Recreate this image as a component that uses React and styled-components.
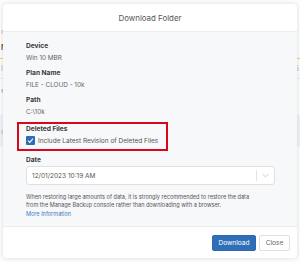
import React from 'react';
import styled, { createGlobalStyle } from 'styled-components';

const GlobalStyle = createGlobalStyle`
  html, body {
    margin: 0;
    padding: 0;
    background: #fafafa;
    font-family: Inter, "Liberation Sans", sans-serif;
  }
  * { box-sizing: border-box; }
`;

const Page = styled.div`
  width: 300px;
  height: 262px;
  position: relative;
  overflow: hidden;
  background: #fbfbfb;
  padding-top: 24px;
  display: flex;
  flex-direction: column;
`;

const PageRow = styled.div`
  height: ${p => p.h || 14}px;
  display: flex;
  align-items: center;
  justify-content: space-between;
  padding: 0 1px;
  font-size: 7px;
  color: ${p => p.color || '#888'};
  font-weight: ${p => (p.bold ? 700 : 400)};
  background: ${p => p.bg || 'transparent'};
  border-bottom: ${p => (p.line ? `1px solid ${p.line}` : 'none')};
`;

const Overlay = styled.div`
  position: absolute;
  inset: 0;
  background: rgba(255, 255, 255, 0.3);
  padding: 4px 3px;
`;

const Modal = styled.div`
  width: 294px;
  height: 254px;
  background: #fff;
  border-radius: 4px;
  box-shadow: 0 0 4px rgba(0, 0, 0, 0.14);
  display: flex;
  flex-direction: column;
  overflow: hidden;
`;

const Header = styled.div`
  height: 28px;
  flex: none;
  display: flex;
  align-items: center;
  justify-content: center;
  border-bottom: 1px solid #ececec;
  font-size: 7.9px;
  color: #555;
`;

const Body = styled.div`
  flex: 1;
  background: #f7f8fa;
  padding: 9px 22px 0 23px;
  display: flex;
  flex-direction: column;
`;

const Field = styled.div`
  display: flex;
  flex-direction: column;
  margin-bottom: 5.5px;
`;

const Label = styled.div`
  font-size: 6.6px;
  line-height: 10px;
  font-weight: 700;
  color: #3a3a3a;
`;

const Value = styled.div`
  font-size: 6.4px;
  line-height: 10px;
  margin-top: 1.5px;
  color: #666;
`;

const Highlight = styled.div`
  align-self: flex-start;
  margin: 0 0 0 -9px;
  width: 151px;
  border: 2px solid #d9061c;
  padding: 0 0 4px 7px;
  display: flex;
  flex-direction: column;
`;

const CheckRow = styled.label`
  display: flex;
  align-items: center;
  gap: 3px;
  margin-top: 2px;
  font-size: 6.5px;
  white-space: nowrap;
  color: #555;
`;

const Check = styled.span`
  width: 9px;
  height: 9px;
  border-radius: 1px;
  background: #2c6db6;
  display: flex;
  align-items: center;
  justify-content: center;
`;

const DateLabel = styled(Label)`
  margin-top: 4px;
`;

const Select = styled.div`
  margin-top: 1px;
  height: 19px;
  width: 249px;
  background: #fff;
  border: 1px solid #e0e0e0;
  border-radius: 3px;
  display: flex;
  align-items: center;
  font-size: 6.5px;
  color: #555;
`;

const SelectText = styled.div`
  flex: 1;
  padding-left: 5px;
`;

const Divider = styled.div`
  width: 1px;
  height: 11px;
  background: #e2e2e2;
`;

const Chevron = styled.div`
  width: 17px;
  display: flex;
  align-items: center;
  justify-content: center;
`;

const Help = styled.p`
  margin: 8px 0 0;
  font-size: 5.55px;
  line-height: 8.3px;
  color: #555;
`;

const Link = styled.a`
  color: #3a78bd;
  text-decoration: none;
`;

const Footer = styled.div`
  height: 32px;
  flex: none;
  border-top: 1px solid #ececec;
  display: flex;
  align-items: center;
  justify-content: flex-end;
  gap: 3px;
  padding-right: 7px;
`;

const Button = styled.button`
  height: 16px;
  width: ${p => (p.primary ? 44 : 31)}px;
  padding: 0;
  font-family: inherit;
  font-size: 6.6px;
  border-radius: 2px;
  border: 1px solid ${p => (p.primary ? '#2b68ad' : '#e0e0e0')};
  background: ${p => (p.primary ? '#2f6fb7' : '#fff')};
  color: ${p => (p.primary ? '#fff' : '#666')};
`;

export default function App() {
  return (
    <>
      <GlobalStyle />
      <Page>
        <PageRow color="#888">n</PageRow>
        <PageRow bold color="#222" h={18}>M</PageRow>
        <PageRow h={3} line="#f1c400" />
        <PageRow h={20} line="#e6e6e6">l<span>5</span></PageRow>
        <PageRow h={22} color="#3a78bd">el</PageRow>
        <PageRow h={14} />
        <PageRow h={32} bg="#e8eef6">o</PageRow>
        <Overlay>
          <Modal>
            <Header>Download Folder</Header>
            <Body>
              <Field>
                <Label>Device</Label>
                <Value>Win 10 MBR</Value>
              </Field>
              <Field>
                <Label>Plan Name</Label>
                <Value>FILE - CLOUD - 10k</Value>
              </Field>
              <Field>
                <Label>Path</Label>
                <Value>C:\10k</Value>
              </Field>
              <Highlight>
                <Label>Deleted Files</Label>
                <CheckRow>
                  <Check>
                    <svg width="7" height="7" viewBox="0 0 10 10">
                      <path d="M1.5 5.2 L4 7.6 L8.6 2.4" fill="none" stroke="#fff" strokeWidth="1.6" />
                    </svg>
                  </Check>
                  Include Latest Revision of Deleted Files
                </CheckRow>
              </Highlight>
              <DateLabel>Date</DateLabel>
              <Select>
                <SelectText>12/01/2023 10:19 AM</SelectText>
                <Divider />
                <Chevron>
                  <svg width="7" height="5" viewBox="0 0 10 6">
                    <path d="M1 1 L5 5 L9 1" fill="none" stroke="#b5b5b5" strokeWidth="1" />
                  </svg>
                </Chevron>
              </Select>
              <Help>
                When restoring large amounts of data, it is strongly recommended to restore the data
                <br />
                from the Manage Backup console rather than downloading with a browser.
                <br />
                <Link href="#">More Information</Link>
              </Help>
            </Body>
            <Footer>
              <Button primary>Download</Button>
              <Button>Close</Button>
            </Footer>
          </Modal>
        </Overlay>
      </Page>
    </>
  );
}
